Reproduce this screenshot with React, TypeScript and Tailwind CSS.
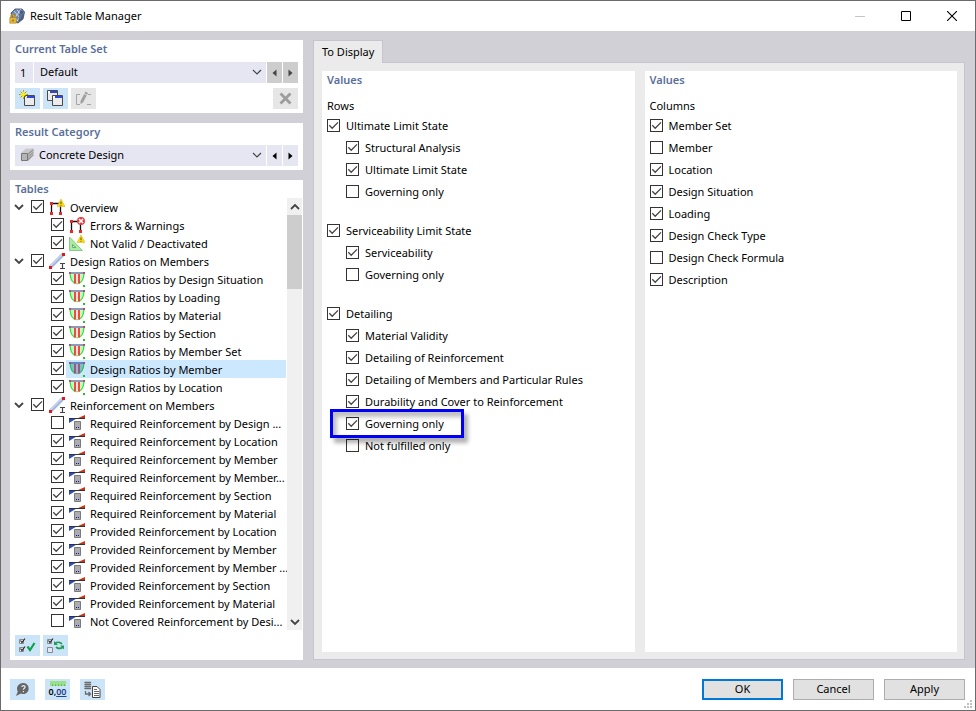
import { useState } from 'react';
import type { ReactNode } from 'react';

type TreeIconKind = 'overview' | 'errors' | 'invalid' | 'member' | 'ratio' | 'rebar';

interface TreeItem {
  label: string;
  icon: TreeIconKind;
  checked: boolean;
  parent?: boolean;
  selected?: boolean;
}

const treeItems: TreeItem[] = [
  { label: 'Overview', icon: 'overview', checked: true, parent: true },
  { label: 'Errors & Warnings', icon: 'errors', checked: true },
  { label: 'Not Valid / Deactivated', icon: 'invalid', checked: true },
  { label: 'Design Ratios on Members', icon: 'member', checked: true, parent: true },
  { label: 'Design Ratios by Design Situation', icon: 'ratio', checked: true },
  { label: 'Design Ratios by Loading', icon: 'ratio', checked: true },
  { label: 'Design Ratios by Material', icon: 'ratio', checked: true },
  { label: 'Design Ratios by Section', icon: 'ratio', checked: true },
  { label: 'Design Ratios by Member Set', icon: 'ratio', checked: true },
  { label: 'Design Ratios by Member', icon: 'ratio', checked: true, selected: true },
  { label: 'Design Ratios by Location', icon: 'ratio', checked: true },
  { label: 'Reinforcement on Members', icon: 'member', checked: true, parent: true },
  { label: 'Required Reinforcement by Design ...', icon: 'rebar', checked: false },
  { label: 'Required Reinforcement by Location', icon: 'rebar', checked: true },
  { label: 'Required Reinforcement by Member', icon: 'rebar', checked: true },
  { label: 'Required Reinforcement by Member...', icon: 'rebar', checked: true },
  { label: 'Required Reinforcement by Section', icon: 'rebar', checked: true },
  { label: 'Required Reinforcement by Material', icon: 'rebar', checked: true },
  { label: 'Provided Reinforcement by Location', icon: 'rebar', checked: true },
  { label: 'Provided Reinforcement by Member', icon: 'rebar', checked: true },
  { label: 'Provided Reinforcement by Member ...', icon: 'rebar', checked: true },
  { label: 'Provided Reinforcement by Section', icon: 'rebar', checked: true },
  { label: 'Provided Reinforcement by Material', icon: 'rebar', checked: true },
  { label: 'Not Covered Reinforcement by Desi...', icon: 'rebar', checked: false },
];

interface Option {
  label: string;
  checked: boolean;
  marked?: boolean;
}

const rowGroups: { title: string; options: Option[] }[] = [
  {
    title: 'Ultimate Limit State',
    options: [
      { label: 'Structural Analysis', checked: true },
      { label: 'Ultimate Limit State', checked: true },
      { label: 'Governing only', checked: false },
    ],
  },
  {
    title: 'Serviceability Limit State',
    options: [
      { label: 'Serviceability', checked: true },
      { label: 'Governing only', checked: false },
    ],
  },
  {
    title: 'Detailing',
    options: [
      { label: 'Material Validity', checked: true },
      { label: 'Detailing of Reinforcement', checked: true },
      { label: 'Detailing of Members and Particular Rules', checked: true },
      { label: 'Durability and Cover to Reinforcement', checked: true },
      { label: 'Governing only', checked: true, marked: true },
      { label: 'Not fulfilled only', checked: false },
    ],
  },
];

const columnOptions: Option[] = [
  { label: 'Member Set', checked: true },
  { label: 'Member', checked: false },
  { label: 'Location', checked: true },
  { label: 'Design Situation', checked: true },
  { label: 'Loading', checked: true },
  { label: 'Design Check Type', checked: true },
  { label: 'Design Check Formula', checked: false },
  { label: 'Description', checked: true },
];

function CheckBox({ id, defaultChecked }: { id: string; defaultChecked: boolean }) {
  return (
    <span className="relative mb-px block size-[13px] shrink-0">
      <input
        id={id}
        type="checkbox"
        defaultChecked={defaultChecked}
        className="peer block size-[13px] appearance-none border border-[#333] bg-white"
      />
      <svg viewBox="0 0 13 13" className="pointer-events-none absolute inset-0 hidden size-[13px] peer-checked:block">
        <path d="M2.3 6.2 5.2 9.2 11 3.4" fill="none" stroke="#444" strokeWidth="1.3" />
      </svg>
    </span>
  );
}

function OptionRow({ id, option }: { id: string; option: Option }) {
  return (
    <li className="relative flex h-[22px] items-center gap-1.5">
      <CheckBox id={id} defaultChecked={option.checked} />
      <label htmlFor={id} className="whitespace-nowrap">
        {option.label}
      </label>
      {option.marked ? (
        <span className="pointer-events-none absolute -top-1 -left-4 z-10 h-[29px] w-[134px] border-[3px] border-[#0000f5] shadow-[4px_5px_4px_rgba(0,0,0,0.3),inset_4px_5px_4px_rgba(0,0,0,0.25)]" />
      ) : null}
    </li>
  );
}

/* 16px tree symbols */
function Frame() {
  return (
    <>
      <path d="M2.5 14V4.5H11.5V14" fill="none" stroke="#111" strokeWidth="1.3" />
      <path d="M1 3h3v3H1zM1 13h3v3H1zM10 13h3v3h-3z" fill="#e8262b" />
    </>
  );
}

function WarningSign() {
  return (
    <>
      <path d="M12 0 16 7.5H8z" fill="#f8d91c" stroke="#d9b400" strokeWidth=".5" />
      <path d="M12 2.5V5M12 5.8v1" stroke="#6b5500" strokeWidth="1" />
    </>
  );
}

function TreeIcon({ kind, tinted }: { kind: TreeIconKind; tinted: boolean }) {
  return (
    <svg viewBox="0 0 16 16" className="size-4 shrink-0">
      {kind === 'overview' && (
        <>
          <Frame />
          <WarningSign />
        </>
      )}
      {kind === 'errors' && (
        <>
          <Frame />
          <circle cx="12" cy="4" r="4" fill="#e63a3f" />
          <path d="M10 2 14 6M14 2 10 6" stroke="#fff" strokeWidth="1.6" />
        </>
      )}
      {kind === 'invalid' && (
        <>
          <path d="M.5 2V15.5H13.5z" fill="#a6f0a0" stroke="#7fb884" strokeWidth=".8" />
          <path d="M3.5 9.5v3H7z" fill="#dff8dc" stroke="#5f9466" strokeWidth=".8" />
          <WarningSign />
        </>
      )}
      {kind === 'member' && (
        <>
          <path d="M1.5 14 14 1.5" stroke="#9db3d8" strokeWidth="3.6" />
          <path d="M1.5 13 13 1.5" stroke="#c9d8ee" strokeWidth="1.4" />
          <path d="M0 13h3v3H0zM13 0h3v3h-3z" fill="#e0181e" />
          <path d="M11 10.5h5M11 15.5h5M13.5 10.5v5" stroke="#444" strokeWidth="1.2" />
        </>
      )}
      {kind === 'ratio' && (
        <>
          <path d="M1 2C1.5 9 4 12.5 8 12.5S14.5 9 15 2z" fill="#c4fbc0" />
          <path d="M1 2.5C1.5 9 4 12.5 8 12.5S14.5 9 15 2.5" fill="none" stroke="#35e03b" strokeWidth="1.3" />
          <path d="M6 2.5h4v10H6z" fill="#ffe3d8" />
          <path d="M6 3v9.5M10 3v9.5" stroke="#ee3a35" strokeWidth="1.8" />
          <path d="M1 1h14v2H1z" fill="#8b9cb8" />
          <path d="M0 1h2v2H0zM14 1h2v2h-2z" fill="#b0506a" />
          {tinted && <path d="M1 1h14v2C14.500 9 12 13 8 13S1.500 9 1 3z" fill="#2f74c8" opacity=".45" />}
          <path d="M14 14h2v2h-2z" fill="#22c02a" />
        </>
      )}
      {kind === 'rebar' && (
        <>
          <path d="M0 3.500h7.500L0 8z" fill="#2c4cc0" />
          <path d="M16 0v3.500H8z" fill="#cc3216" />
          <path d="M0 3.500h16" stroke="#333" strokeWidth="1" />
          <path d="M5.500 6.500h6v8h-6z" fill="#adadad" stroke="#7a7a7a" strokeWidth="1" />
          <path d="M7 12h1v1H7zM9 12h1v1H9z" fill="#1010c8" />
        </>
      )}
    </svg>
  );
}

function Chevron({ className }: { className: string }) {
  return (
    <svg viewBox="0 0 10 10" className={className}>
      <path d="M1 3 5 7 9 3" fill="none" stroke="currentColor" strokeWidth="1.2" />
    </svg>
  );
}

function StepButton({ label, back, disabled }: { label: string; back?: boolean; disabled?: boolean }) {
  return (
    <button
      type="button"
      aria-label={label}
      disabled={disabled}
      className="flex h-[21px] w-[15px] items-center justify-center bg-[#e6e6f2] text-black disabled:bg-[#cdcdcd] disabled:text-[#444]"
    >
      <svg viewBox="0 0 5 8" className="h-2 w-[5px]">
        <path d={back ? 'M4.5 .5v7L.5 4z' : 'M.5 .5v7l4-3.5z'} fill="currentColor" />
      </svg>
    </button>
  );
}

function ToolButton({ label, disabled, children }: { label: string; disabled?: boolean; children: ReactNode }) {
  return (
    <button
      type="button"
      aria-label={label}
      disabled={disabled}
      className="flex h-[21px] w-[25px] items-center justify-center bg-[#cce4f7] disabled:bg-[#e6e6e6]"
    >
      <svg viewBox="0 0 17 17" className="size-[17px]">
        {children}
      </svg>
    </button>
  );
}

function PanelTitle({ children }: { children: ReactNode }) {
  return <h2 className="h-[18px] leading-[18px] font-semibold text-[#5a6f9a]">{children}</h2>;
}

function MiniWindow({ x, y }: { x: number; y: number }) {
  return (
    <g transform={`translate(${x} ${y})`}>
      <path d="M.5 .5h10v10H.5z" fill="#ececec" stroke="#4a4a4a" />
      <path d="M1 1h9v2H1z" fill="#fff" />
      <path d="M3 1h7v2H3z" fill="#3045e6" />
    </g>
  );
}

function TitleBar() {
  return (
    <header className="flex h-[30px] items-center bg-white pl-2">
      <svg viewBox="0 0 16 16" className="size-4">
        <path d="M2 5 6 1l7 0 2.5 3-1.5 7-5 4-5-2z" fill="#6f88b0" stroke="#34415c" strokeWidth=".8" />
        <path d="M5 3l7 8M8 1.5l5 7M3 6l6 7M12 1 5 11M15 4 8 13" stroke="#dbe5f5" strokeWidth=".8" />
        <path d="M11 2 15 4 13.5 11 9.5 14" fill="#33415f" opacity=".6" />
        <path d="M2 10V8.5a2 2 0 0 1 4 0V10" fill="none" stroke="#b48a1d" strokeWidth="1.3" />
        <path d="M.8 9.5h6.5v5.7H.8z" fill="#e6b93b" stroke="#a67c14" strokeWidth=".6" />
        <path d="M4 11.5v2" stroke="#6b4e08" />
      </svg>
      <h1 className="flex-1 pl-[5px]">Result Table Manager</h1>
      <button type="button" aria-label="Minimize" disabled className="flex h-full w-[46px] items-center justify-center text-[#c4c4c4]">
        <svg viewBox="0 0 10 10" className="size-2.5">
          <path d="M0 5.5h10" stroke="currentColor" />
        </svg>
      </button>
      <button type="button" aria-label="Maximize" className="flex h-full w-[46px] items-center justify-center">
        <svg viewBox="0 0 10 10" className="size-2.5">
          <path d="M.5 .5h9v9h-9z" fill="none" stroke="#000" />
        </svg>
      </button>
      <button type="button" aria-label="Close" className="flex h-full w-[46px] items-center justify-center">
        <svg viewBox="0 0 10 10" className="size-2.5">
          <path d="M0 0 10 10M10 0 0 10" stroke="#000" strokeWidth="1.1" />
        </svg>
      </button>
    </header>
  );
}

function TableSetPanel() {
  return (
    <section className="bg-white px-[5px] pb-1">
      <div className="pb-1">
        <PanelTitle>Current Table Set</PanelTitle>
      </div>
      <div className="flex gap-px">
        <div className="flex h-[21px] flex-1 bg-[#e6e6f2]">
          <label htmlFor="table-set" className="w-[19px] border-r border-white pl-[5px] leading-[21px]">
            1
          </label>
          <div className="relative flex-1">
            <select id="table-set" className="h-[21px] w-full appearance-none bg-transparent pl-1.5">
              <option>Default</option>
            </select>
            <Chevron className="pointer-events-none absolute top-[5px] right-1 size-2.5 text-[#444]" />
          </div>
        </div>
        <StepButton label="Previous table set" back disabled />
        <StepButton label="Next table set" disabled />
      </div>
      <div className="flex gap-[3px] pt-[5px]">
        <ToolButton label="New table set">
          <MiniWindow x={5} y={5} />
          <path d="M4.5 0v9M0 4.5h9M1.5 1.5l6 6M7.5 1.5l-6 6" stroke="#a8980a" strokeWidth="1" />
          <path d="M4.500 1 5.500 3.500 8 4.500 5.500 5.500 4.500 8 3.500 5.500 1 4.500 3.500 3.500z" fill="#fff200" />
        </ToolButton>
        <ToolButton label="Copy table set">
          <MiniWindow x={0} y={0} />
          <MiniWindow x={5} y={5} />
        </ToolButton>
        <ToolButton label="Rename table set" disabled>
          <path d="M5 4.5H1.5v10H5M12 14.5h4M13 4.5h3" fill="none" stroke="#a6a6a6" />
          <path d="M10.5 1.5 13 3 8 12.5 5.5 14 5.5 11z" fill="#a0a0a0" />
          <path d="M9 3.5l3 1.7" stroke="#e6e6e6" strokeWidth=".8" />
        </ToolButton>
        <span className="flex-1" />
        <ToolButton label="Delete table set" disabled>
          <path d="M3.5 3.5l10 10M13.5 3.5l-10 10" stroke="#9c9c9c" strokeWidth="2.8" />
        </ToolButton>
      </div>
    </section>
  );
}

function CategoryPanel() {
  return (
    <section className="bg-white px-[5px] pb-1">
      <div className="pb-1">
        <PanelTitle>Result Category</PanelTitle>
      </div>
      <div className="flex gap-px">
        <div className="relative h-[21px] flex-1 bg-[#e6e6f2]">
          <svg viewBox="0 0 14 14" className="pointer-events-none absolute top-[3px] left-[5px] size-3.5">
            <path d="M1 5 6 .5h7.5L8 5z" fill="#c9c9c9" />
            <path d="M8 5l5.5-4.5v7L8 13z" fill="#9b9b9b" />
            <path d="M1.5 5.5h6v7h-6z" fill="#b5b5b5" stroke="#777" />
            <path d="M8 7.5l5.5-4.500M8 10l5.500-4.500" stroke="#ccc" strokeWidth=".8" />
          </svg>
          <select aria-label="Result Category" className="h-[21px] w-full appearance-none bg-transparent pl-6">
            <option>Concrete Design</option>
          </select>
          <Chevron className="pointer-events-none absolute top-[5px] right-1 size-2.5 text-[#444]" />
        </div>
        <StepButton label="Previous category" back />
        <StepButton label="Next category" />
      </div>
    </section>
  );
}

function TablesPanel() {
  const [selected, setSelected] = useState(treeItems.findIndex((item) => item.selected));

  return (
    <section className="flex-1 bg-white pb-1">
      <div className="px-[5px]">
        <PanelTitle>Tables</PanelTitle>
      </div>
      <div className="flex pr-px">
        <ul className="min-w-0 flex-1 pr-px pl-1">
          {treeItems.map((item, index) => (
            <li key={item.label} className={item.parent ? 'flex h-[18px] items-center' : 'flex h-[18px] items-center pl-[37px]'}>
              {item.parent ? (
                <button type="button" aria-label={`Collapse ${item.label}`} className="w-[17px] text-[#444]">
                  <svg viewBox="0 0 10 10" className="size-2.5">
                    <path d="M1 3 5 7 9 3" fill="none" stroke="currentColor" strokeWidth="1.8" />
                  </svg>
                </button>
              ) : null}
              <CheckBox id={`table-${index}`} defaultChecked={item.checked} />
              <span
                onClick={() => setSelected(index)}
                className={
                  index === selected
                    ? 'ml-0.5 flex h-[18px] min-w-0 flex-1 items-center gap-[5px] bg-[#cce8ff] pl-[3px]'
                    : 'ml-0.5 flex h-[18px] min-w-0 flex-1 items-center gap-[5px] pl-[3px]'
                }
              >
                <TreeIcon kind={item.icon} tinted={index === selected} />
                <label htmlFor={`table-${index}`} className="pt-0.5 whitespace-nowrap">
                  {item.label}
                </label>
              </span>
            </li>
          ))}
        </ul>
        <div className="flex w-[15px] shrink-0 flex-col bg-[#f0f0f0] text-[#444]">
          <button type="button" aria-label="Scroll up" className="flex h-[17px] items-center justify-center">
            <svg viewBox="0 0 10 10" className="size-2.5">
              <path d="M1 7 5 3 9 7" fill="none" stroke="currentColor" strokeWidth="1.8" />
            </svg>
          </button>
          <div className="h-[74px] bg-[#cdcdcd]" />
          <span className="flex-1" />
          <button type="button" aria-label="Scroll down" className="flex h-[17px] items-center justify-center">
            <svg viewBox="0 0 10 10" className="size-2.5">
              <path d="M1 3 5 7 9 3" fill="none" stroke="currentColor" strokeWidth="1.8" />
            </svg>
          </button>
        </div>
      </div>
      <div className="flex gap-[3px] px-[5px] pt-[5px]">
        <ToolButton label="Select all">
          <path d="M.5 2.5h4v4h-4zM.5 10.5h4v4h-4z" fill="#eef4fa" stroke="#8a8a8a" />
          <path d="M1.5 3.500 3 5.500l3-4M1.500 11.500 3 13.500l3-4" fill="none" stroke="#222" strokeWidth="1.1" />
          <path d="M8.5 9.5l2.500 3.500L15.500 6" fill="none" stroke="#12a04c" strokeWidth="2.2" />
        </ToolButton>
        <ToolButton label="Invert selection">
          <path d="M.5 2.5h4v4h-4zM.5 10.5h5v5h-5z" fill="#dfeaf4" stroke="#8a8a8a" />
          <path d="M1.5 3.500 3 5.500l3-4" fill="none" stroke="#222" strokeWidth="1.1" />
          <path d="M8 6.500C10 4.800 13 4.800 15 7M16 9.800C14 12 11 12 9 10" fill="none" stroke="#239b56" strokeWidth="1.8" />
          <path d="M7 4v4h4zM17 12.500v-4h-4z" fill="#239b56" />
        </ToolButton>
      </div>
    </section>
  );
}

function DisplayPanel() {
  return (
    <main className="flex min-w-0 flex-1 flex-col">
      <div role="tablist" className="flex">
        <button
          type="button"
          role="tab"
          aria-selected="true"
          className="relative z-10 -mb-px h-[23px] border border-b-0 border-[#c6c5cf] bg-[#ebebeb] px-2 pt-px"
        >
          To Display
        </button>
      </div>
      <div className="flex flex-1 gap-2.5 border border-[#c6c5cf] bg-[#ebebeb] p-2 pr-[7px] pb-[7px]">
        <section className="flex-1 bg-white px-[5px]">
          <PanelTitle>Values</PanelTitle>
          <h3 className="pt-2 leading-[18px]">Rows</h3>
          <ul className="flex flex-col gap-[17px]">
            {rowGroups.map((group, groupIndex) => (
              <li key={group.title}>
                <div className="flex h-[22px] items-center gap-1.5">
                  <CheckBox id={`group-${groupIndex}`} defaultChecked />
                  <label htmlFor={`group-${groupIndex}`}>{group.title}</label>
                </div>
                <ul className="pl-[19px]">
                  {group.options.map((option, index) => (
                    <OptionRow key={option.label} id={`row-${groupIndex}-${index}`} option={option} />
                  ))}
                </ul>
              </li>
            ))}
          </ul>
        </section>
        <section className="flex-1 bg-white px-[5px]">
          <PanelTitle>Values</PanelTitle>
          <h3 className="pt-2 leading-[18px]">Columns</h3>
          <ul>
            {columnOptions.map((option, index) => (
              <OptionRow key={option.label} id={`column-${index}`} option={option} />
            ))}
          </ul>
        </section>
      </div>
    </main>
  );
}

function Footer() {
  return (
    <footer className="relative flex h-[42px] items-center gap-2.5 bg-white px-[9px] pr-2.5">
      <ToolButton label="Help">
        <path d="M9.500 2a5.500 5.500 0 1 1-2.500 10.500L2 15l1.800-4.500A5.700 5.700 0 0 1 9.500 2z" fill="#666" />
        <path d="M7.800 6C8 4 11.200 4.200 11 6.200 10.900 7.400 9.400 7.400 9.400 8.800M9.400 10v1.300" fill="none" stroke="#dcecf8" strokeWidth="1.300" />
      </ToolButton>
      <button
        type="button"
        aria-label="Units and decimal places"
        className="flex h-[21px] w-[25px] flex-col items-center justify-center bg-[#cce4f7]"
      >
        <svg viewBox="0 0 16 5" className="h-[5px] w-4 shrink-0">
          <path d="M0 0h16v5H0z" fill="#98e08c" />
          <path d="M2.5 5V3.5M5.5 5V3.5M8.5 5V3.5M11.5 5V3.5M14.5 5V3.5" stroke="#5fae54" />
        </svg>
        <span className="text-[9px] leading-[12px] font-semibold">
          0,<span className="text-[#1f3f8f] underline">00</span>
        </span>
      </button>
      <ToolButton label="Export data">
        <path d="M1 1.500h5.500M1 3.500h5.500M1 5.500h5.500M1 7.500h5.500" stroke="#6a6a6a" strokeWidth="1.400" strokeLinecap="round" />
        <path d="M1.500 10v3H6M4.500 11l2 2-2 2" fill="none" stroke="#6a6a6a" strokeWidth="1.300" />
        <path d="M8.500 5.500h4.500l3 3v8H8.500z" fill="#fff" stroke="#444" />
        <path d="M10 8.500h3M10 10.500h5M10 12.500h5M10 14.500h5" stroke="#666" />
      </ToolButton>
      <span className="flex-1" />
      <button type="button" className="h-[21px] w-[81px] border-2 border-[#0078d7] bg-[#e1e1e1]">
        OK
      </button>
      <button type="button" className="h-[21px] w-[81px] border border-[#adadad] bg-[#e1e1e1]">
        Cancel
      </button>
      <button type="button" className="h-[21px] w-[81px] border border-[#adadad] bg-[#e1e1e1]">
        Apply
      </button>
      <svg viewBox="0 0 8 8" className="absolute right-[3px] bottom-0.5 size-2">
        <path d="M6 0h2v2H6zM3 3h2v2H3zM6 3h2v2H6zM0 6h2v2H0zM3 6h2v2H3zM6 6h2v2H6z" fill="#bfbfbf" />
      </svg>
    </footer>
  );
}

export default function App() {
  return (
    <div className="flex min-h-screen flex-col border border-[#6b6b6b] bg-[#d1d0d6] font-['Noto_Sans','Open_Sans',sans-serif] text-[11px] text-black">
      <TitleBar />
      <div className="flex flex-1 gap-2.5 px-[9px] pt-[9px] pr-2.5 pb-2">
        <aside className="flex w-[293px] shrink-0 flex-col gap-2.5">
          <TableSetPanel />
          <CategoryPanel />
          <TablesPanel />
        </aside>
        <DisplayPanel />
      </div>
      <Footer />
    </div>
  );
}
